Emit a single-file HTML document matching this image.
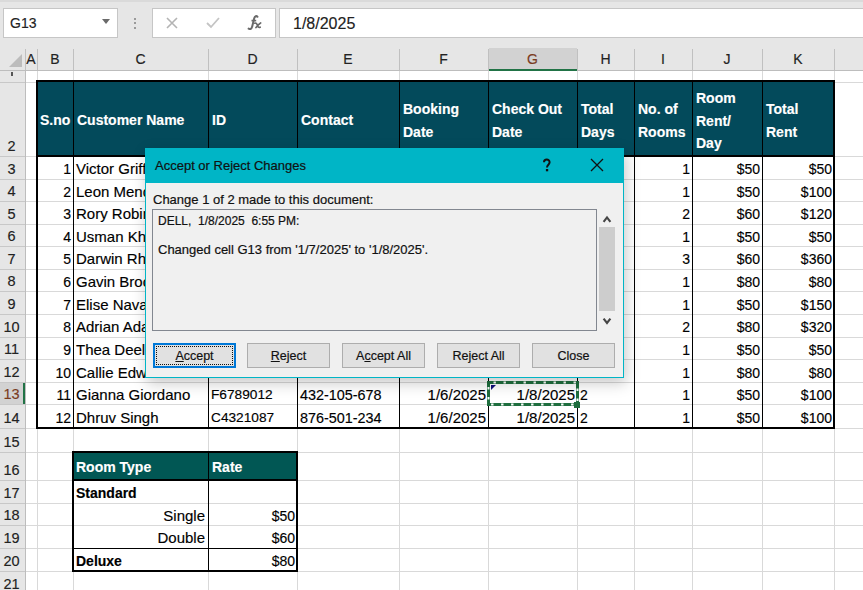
<!DOCTYPE html><html><head><meta charset="utf-8"><style>
*{box-sizing:border-box;margin:0;padding:0}
html,body{width:863px;height:590px;overflow:hidden;background:#fff;font-family:"Liberation Sans", sans-serif;}
.a{position:absolute}
.t{position:absolute;white-space:nowrap;font-size:14px;color:#000;line-height:16px;-webkit-text-stroke:0.15px currentColor}
.hb{font-weight:bold;color:#fff}
.d{-webkit-text-stroke:0.2px #111}
.s{-webkit-text-stroke:0.15px #000}
.g{position:absolute;background:#d9d9d9}
.k{position:absolute;background:#000}
</style></head><body>

<div class="a" style="left:0;top:0;width:863px;height:47px;background:#e6e6e6"></div>
<div class="a" style="left:0;top:0;width:863px;height:2px;background:#dadada"></div>
<div class="a" style="left:3px;top:8px;width:115px;height:30px;background:#fff;border:1px solid #c6c6c6"></div>
<div class="t" style="left:10px;top:15px;font-size:14px;color:#222">G13</div>
<div class="a" style="left:102px;top:19px;width:0;height:0;border-left:4px solid transparent;border-right:4px solid transparent;border-top:5px solid #6a6a6a"></div>
<div class="a" style="left:134px;top:18px;width:2px;height:2px;background:#9a9a9a"></div>
<div class="a" style="left:134px;top:22px;width:2px;height:2px;background:#9a9a9a"></div>
<div class="a" style="left:134px;top:27px;width:2px;height:2px;background:#9a9a9a"></div>
<div class="a" style="left:152px;top:8px;width:124px;height:30px;background:#fff;border:1px solid #c6c6c6"></div>
<svg class="a" style="left:165px;top:16px" width="14" height="14" viewBox="0 0 14 14"><path d="M2 2L12 12M12 2L2 12" stroke="#b4b4b4" stroke-width="1.6"/></svg>
<svg class="a" style="left:205px;top:16px" width="16" height="14" viewBox="0 0 16 14"><path d="M2 7L6 11L14 2" stroke="#c4c4c4" stroke-width="1.8" fill="none"/></svg>
<svg class="a" style="left:244px;top:13px" width="22" height="20" viewBox="0 0 22 20"><path d="M13.5 3.8C12.6 2.6 10.8 3 10.2 5.2L8.2 13.6C7.6 16 6.5 16.6 4.6 15.6" stroke="#6a6a6a" stroke-width="2" fill="none" stroke-linecap="round"/><path d="M7.5 7.6H12.2" stroke="#6a6a6a" stroke-width="1.7"/><path d="M10.8 10.2C12 9.6 12.8 10.4 13.4 12.2C14 14 14.6 14.8 16.2 14.2M16.6 10C15.4 10.6 13.4 12.8 12 14.6" stroke="#6a6a6a" stroke-width="1.7" fill="none" stroke-linecap="round"/></svg>
<div class="a" style="left:279px;top:8px;width:590px;height:30px;background:#fff;border:1px solid #c6c6c6"></div>
<div class="t" style="left:293px;top:16px;font-size:16px;color:#222">1/8/2025</div>
<div class="a" style="left:0;top:47px;width:863px;height:24px;background:#e6e6e6"></div>
<div class="a" style="left:0;top:70px;width:863px;height:1px;background:#bdbdbd"></div>
<div class="a" style="left:489px;top:48px;width:88px;height:22px;background:#d2d2d2"></div>
<div class="a" style="left:489px;top:69px;width:88px;height:2px;background:#217346"></div>
<svg class="a" style="left:9px;top:54px" width="13" height="13" viewBox="0 0 13 13"><path d="M13 0L13 13L0 13Z" fill="#bcbcbc"/></svg>
<div class="t" style="left:25px;top:51px;width:12px;text-align:center;font-size:14px;color:#222">A</div>
<div class="t" style="left:37px;top:51px;width:36px;text-align:center;font-size:14px;color:#222">B</div>
<div class="t" style="left:73px;top:51px;width:135px;text-align:center;font-size:14px;color:#222">C</div>
<div class="t" style="left:208px;top:51px;width:89px;text-align:center;font-size:14px;color:#222">D</div>
<div class="t" style="left:297px;top:51px;width:102px;text-align:center;font-size:14px;color:#222">E</div>
<div class="t" style="left:399px;top:51px;width:89px;text-align:center;font-size:14px;color:#222">F</div>
<div class="t" style="left:488px;top:51px;width:89px;text-align:center;font-size:14px;color:#7a3b1e">G</div>
<div class="t" style="left:577px;top:51px;width:57px;text-align:center;font-size:14px;color:#222">H</div>
<div class="t" style="left:634px;top:51px;width:58px;text-align:center;font-size:14px;color:#222">I</div>
<div class="t" style="left:692px;top:51px;width:70px;text-align:center;font-size:14px;color:#222">J</div>
<div class="t" style="left:762px;top:51px;width:72px;text-align:center;font-size:14px;color:#222">K</div>
<div class="a" style="left:25px;top:49px;width:1px;height:21px;background:#c0c0c0"></div>
<div class="a" style="left:37px;top:49px;width:1px;height:21px;background:#c0c0c0"></div>
<div class="a" style="left:73px;top:49px;width:1px;height:21px;background:#c0c0c0"></div>
<div class="a" style="left:208px;top:49px;width:1px;height:21px;background:#c0c0c0"></div>
<div class="a" style="left:297px;top:49px;width:1px;height:21px;background:#c0c0c0"></div>
<div class="a" style="left:399px;top:49px;width:1px;height:21px;background:#c0c0c0"></div>
<div class="a" style="left:488px;top:49px;width:1px;height:21px;background:#c0c0c0"></div>
<div class="a" style="left:577px;top:49px;width:1px;height:21px;background:#c0c0c0"></div>
<div class="a" style="left:634px;top:49px;width:1px;height:21px;background:#c0c0c0"></div>
<div class="a" style="left:692px;top:49px;width:1px;height:21px;background:#c0c0c0"></div>
<div class="a" style="left:762px;top:49px;width:1px;height:21px;background:#c0c0c0"></div>
<div class="a" style="left:834px;top:49px;width:1px;height:21px;background:#c0c0c0"></div>
<div class="a" style="left:0;top:71px;width:25px;height:530px;background:#e6e6e6"></div>
<div class="a" style="left:25px;top:71px;width:1px;height:530px;background:#bdbdbd"></div>
<div class="a" style="left:0;top:383px;width:25px;height:21px;background:#d2d2d2"></div>
<div class="a" style="left:23px;top:382px;width:2px;height:23px;background:#217346"></div>
<div class="a" style="left:0;top:82px;width:25px;height:1px;background:#c8c8c8"></div>
<div class="a" style="left:11px;top:72px;width:2px;height:4px;background:#555"></div>
<div class="a" style="left:0;top:156px;width:25px;height:1px;background:#c8c8c8"></div>
<div class="t" style="left:-1px;top:138px;width:25px;text-align:center;font-size:14.5px;color:#222">2</div>
<div class="a" style="left:0;top:179px;width:25px;height:1px;background:#c8c8c8"></div>
<div class="t" style="left:-1px;top:161px;width:25px;text-align:center;font-size:14.5px;color:#222">3</div>
<div class="a" style="left:0;top:201px;width:25px;height:1px;background:#c8c8c8"></div>
<div class="t" style="left:-1px;top:183px;width:25px;text-align:center;font-size:14.5px;color:#222">4</div>
<div class="a" style="left:0;top:224px;width:25px;height:1px;background:#c8c8c8"></div>
<div class="t" style="left:-1px;top:206px;width:25px;text-align:center;font-size:14.5px;color:#222">5</div>
<div class="a" style="left:0;top:246px;width:25px;height:1px;background:#c8c8c8"></div>
<div class="t" style="left:-1px;top:228px;width:25px;text-align:center;font-size:14.5px;color:#222">6</div>
<div class="a" style="left:0;top:269px;width:25px;height:1px;background:#c8c8c8"></div>
<div class="t" style="left:-1px;top:251px;width:25px;text-align:center;font-size:14.5px;color:#222">7</div>
<div class="a" style="left:0;top:291px;width:25px;height:1px;background:#c8c8c8"></div>
<div class="t" style="left:-1px;top:273px;width:25px;text-align:center;font-size:14.5px;color:#222">8</div>
<div class="a" style="left:0;top:314px;width:25px;height:1px;background:#c8c8c8"></div>
<div class="t" style="left:-1px;top:296px;width:25px;text-align:center;font-size:14.5px;color:#222">9</div>
<div class="a" style="left:0;top:337px;width:25px;height:1px;background:#c8c8c8"></div>
<div class="t" style="left:-1px;top:319px;width:25px;text-align:center;font-size:14.5px;color:#222">10</div>
<div class="a" style="left:0;top:359px;width:25px;height:1px;background:#c8c8c8"></div>
<div class="t" style="left:-1px;top:341px;width:25px;text-align:center;font-size:14.5px;color:#222">11</div>
<div class="a" style="left:0;top:382px;width:25px;height:1px;background:#c8c8c8"></div>
<div class="t" style="left:-1px;top:364px;width:25px;text-align:center;font-size:14.5px;color:#222">12</div>
<div class="a" style="left:0;top:404px;width:25px;height:1px;background:#c8c8c8"></div>
<div class="t" style="left:-1px;top:386px;width:25px;text-align:center;font-size:14.5px;color:#7a3b1e">13</div>
<div class="a" style="left:0;top:428px;width:25px;height:1px;background:#c8c8c8"></div>
<div class="t" style="left:-1px;top:410px;width:25px;text-align:center;font-size:14.5px;color:#222">14</div>
<div class="a" style="left:0;top:452px;width:25px;height:1px;background:#c8c8c8"></div>
<div class="t" style="left:-1px;top:434px;width:25px;text-align:center;font-size:14.5px;color:#222">15</div>
<div class="a" style="left:0;top:480px;width:25px;height:1px;background:#c8c8c8"></div>
<div class="t" style="left:-1px;top:462px;width:25px;text-align:center;font-size:14.5px;color:#222">16</div>
<div class="a" style="left:0;top:503px;width:25px;height:1px;background:#c8c8c8"></div>
<div class="t" style="left:-1px;top:485px;width:25px;text-align:center;font-size:14.5px;color:#222">17</div>
<div class="a" style="left:0;top:525px;width:25px;height:1px;background:#c8c8c8"></div>
<div class="t" style="left:-1px;top:507px;width:25px;text-align:center;font-size:14.5px;color:#222">18</div>
<div class="a" style="left:0;top:548px;width:25px;height:1px;background:#c8c8c8"></div>
<div class="t" style="left:-1px;top:530px;width:25px;text-align:center;font-size:14.5px;color:#222">19</div>
<div class="a" style="left:0;top:571px;width:25px;height:1px;background:#c8c8c8"></div>
<div class="t" style="left:-1px;top:553px;width:25px;text-align:center;font-size:14.5px;color:#222">20</div>
<div class="a" style="left:0;top:594px;width:25px;height:1px;background:#c8c8c8"></div>
<div class="t" style="left:-1px;top:576px;width:25px;text-align:center;font-size:14.5px;color:#222">21</div>
<div class="g" style="left:37px;top:71px;width:1px;height:530px"></div>
<div class="g" style="left:73px;top:71px;width:1px;height:530px"></div>
<div class="g" style="left:208px;top:71px;width:1px;height:530px"></div>
<div class="g" style="left:297px;top:71px;width:1px;height:530px"></div>
<div class="g" style="left:399px;top:71px;width:1px;height:530px"></div>
<div class="g" style="left:488px;top:71px;width:1px;height:530px"></div>
<div class="g" style="left:577px;top:71px;width:1px;height:530px"></div>
<div class="g" style="left:634px;top:71px;width:1px;height:530px"></div>
<div class="g" style="left:692px;top:71px;width:1px;height:530px"></div>
<div class="g" style="left:762px;top:71px;width:1px;height:530px"></div>
<div class="g" style="left:834px;top:71px;width:1px;height:530px"></div>
<div class="g" style="left:26px;top:82px;width:840px;height:1px"></div>
<div class="g" style="left:26px;top:156px;width:840px;height:1px"></div>
<div class="g" style="left:26px;top:179px;width:840px;height:1px"></div>
<div class="g" style="left:26px;top:201px;width:840px;height:1px"></div>
<div class="g" style="left:26px;top:224px;width:840px;height:1px"></div>
<div class="g" style="left:26px;top:246px;width:840px;height:1px"></div>
<div class="g" style="left:26px;top:269px;width:840px;height:1px"></div>
<div class="g" style="left:26px;top:291px;width:840px;height:1px"></div>
<div class="g" style="left:26px;top:314px;width:840px;height:1px"></div>
<div class="g" style="left:26px;top:337px;width:840px;height:1px"></div>
<div class="g" style="left:26px;top:359px;width:840px;height:1px"></div>
<div class="g" style="left:26px;top:382px;width:840px;height:1px"></div>
<div class="g" style="left:26px;top:404px;width:840px;height:1px"></div>
<div class="g" style="left:26px;top:428px;width:840px;height:1px"></div>
<div class="g" style="left:26px;top:452px;width:840px;height:1px"></div>
<div class="g" style="left:26px;top:480px;width:840px;height:1px"></div>
<div class="g" style="left:26px;top:503px;width:840px;height:1px"></div>
<div class="g" style="left:26px;top:525px;width:840px;height:1px"></div>
<div class="g" style="left:26px;top:548px;width:840px;height:1px"></div>
<div class="g" style="left:26px;top:571px;width:840px;height:1px"></div>
<div class="g" style="left:26px;top:594px;width:840px;height:1px"></div>
<div class="a" style="left:36px;top:81px;width:799px;height:75px;background:#034a5b"></div>
<div class="a" style="left:36px;top:156px;width:799px;height:272px;background:#fff"></div>
<div class="g" style="left:36px;top:179px;width:799px;height:1px"></div>
<div class="g" style="left:36px;top:201px;width:799px;height:1px"></div>
<div class="g" style="left:36px;top:224px;width:799px;height:1px"></div>
<div class="g" style="left:36px;top:246px;width:799px;height:1px"></div>
<div class="g" style="left:36px;top:269px;width:799px;height:1px"></div>
<div class="g" style="left:36px;top:291px;width:799px;height:1px"></div>
<div class="g" style="left:36px;top:314px;width:799px;height:1px"></div>
<div class="g" style="left:36px;top:337px;width:799px;height:1px"></div>
<div class="g" style="left:36px;top:359px;width:799px;height:1px"></div>
<div class="g" style="left:36px;top:382px;width:799px;height:1px"></div>
<div class="g" style="left:36px;top:404px;width:799px;height:1px"></div>
<div class="k" style="left:73px;top:81px;width:1px;height:347px"></div>
<div class="k" style="left:208px;top:81px;width:1px;height:347px"></div>
<div class="k" style="left:297px;top:81px;width:1px;height:347px"></div>
<div class="k" style="left:399px;top:81px;width:1px;height:347px"></div>
<div class="k" style="left:488px;top:81px;width:1px;height:347px"></div>
<div class="k" style="left:577px;top:81px;width:1px;height:347px"></div>
<div class="k" style="left:634px;top:81px;width:1px;height:347px"></div>
<div class="k" style="left:692px;top:81px;width:1px;height:347px"></div>
<div class="k" style="left:762px;top:81px;width:1px;height:347px"></div>
<div class="k" style="left:36px;top:80px;width:799px;height:2px"></div>
<div class="k" style="left:36px;top:427px;width:799px;height:2px"></div>
<div class="k" style="left:36px;top:80px;width:2px;height:349px"></div>
<div class="k" style="left:833px;top:80px;width:2px;height:349px"></div>
<div class="k" style="left:36px;top:155px;width:799px;height:2px"></div>
<div class="t hb" style="left:40px;top:112px">S.no</div>
<div class="t hb" style="left:77px;top:112px">Customer Name</div>
<div class="t hb" style="left:212px;top:112px">ID</div>
<div class="t hb" style="left:301px;top:112px">Contact</div>
<div class="t hb" style="left:403px;top:101px">Booking</div>
<div class="t hb" style="left:403px;top:124px">Date</div>
<div class="t hb" style="left:492px;top:101px">Check Out</div>
<div class="t hb" style="left:492px;top:124px">Date</div>
<div class="t hb" style="left:581px;top:101px">Total</div>
<div class="t hb" style="left:581px;top:124px">Days</div>
<div class="t hb" style="left:638px;top:101px">No. of</div>
<div class="t hb" style="left:638px;top:124px">Rooms</div>
<div class="t hb" style="left:696px;top:90px">Room</div>
<div class="t hb" style="left:696px;top:113px">Rent/</div>
<div class="t hb" style="left:696px;top:135px">Day</div>
<div class="t hb" style="left:766px;top:101px">Total</div>
<div class="t hb" style="left:766px;top:124px">Rent</div>
<div class="t" style="left:37px;top:161px;width:34px;text-align:right;font-size:14px">1</div>
<div class="t" style="left:76px;top:161px;font-size:15px">Victor Griffin</div>
<div class="t" style="left:211px;top:161px;font-size:13.7px">V1234567</div>
<div class="t" style="left:300px;top:161px;font-size:14.4px">123-456-789</div>
<div class="t" style="left:399px;top:161px;width:87px;text-align:right;font-size:15px">1/1/2025</div>
<div class="t" style="left:488px;top:161px;width:87px;text-align:right;font-size:15px">1/3/2025</div>
<div class="t" style="left:580px;top:161px;font-size:14px">2</div>
<div class="t" style="left:634px;top:161px;width:56px;text-align:right;font-size:14px">1</div>
<div class="t" style="left:692px;top:161px;width:68px;text-align:right;font-size:14px">$50</div>
<div class="t" style="left:762px;top:161px;width:70px;text-align:right;font-size:14px">$50</div>
<div class="t" style="left:37px;top:184px;width:34px;text-align:right;font-size:14px">2</div>
<div class="t" style="left:76px;top:184px;font-size:15px">Leon Mendez</div>
<div class="t" style="left:211px;top:184px;font-size:13.7px">L2345678</div>
<div class="t" style="left:300px;top:184px;font-size:14.4px">234-567-890</div>
<div class="t" style="left:399px;top:184px;width:87px;text-align:right;font-size:15px">1/2/2025</div>
<div class="t" style="left:488px;top:184px;width:87px;text-align:right;font-size:15px">1/4/2025</div>
<div class="t" style="left:580px;top:184px;font-size:14px">2</div>
<div class="t" style="left:634px;top:184px;width:56px;text-align:right;font-size:14px">1</div>
<div class="t" style="left:692px;top:184px;width:68px;text-align:right;font-size:14px">$50</div>
<div class="t" style="left:762px;top:184px;width:70px;text-align:right;font-size:14px">$100</div>
<div class="t" style="left:37px;top:206px;width:34px;text-align:right;font-size:14px">3</div>
<div class="t" style="left:76px;top:206px;font-size:15px">Rory Robinson</div>
<div class="t" style="left:211px;top:206px;font-size:13.7px">R3456789</div>
<div class="t" style="left:300px;top:206px;font-size:14.4px">345-678-901</div>
<div class="t" style="left:399px;top:206px;width:87px;text-align:right;font-size:15px">1/2/2025</div>
<div class="t" style="left:488px;top:206px;width:87px;text-align:right;font-size:15px">1/4/2025</div>
<div class="t" style="left:580px;top:206px;font-size:14px">2</div>
<div class="t" style="left:634px;top:206px;width:56px;text-align:right;font-size:14px">2</div>
<div class="t" style="left:692px;top:206px;width:68px;text-align:right;font-size:14px">$60</div>
<div class="t" style="left:762px;top:206px;width:70px;text-align:right;font-size:14px">$120</div>
<div class="t" style="left:37px;top:229px;width:34px;text-align:right;font-size:14px">4</div>
<div class="t" style="left:76px;top:229px;font-size:15px">Usman Khan</div>
<div class="t" style="left:211px;top:229px;font-size:13.7px">U4567890</div>
<div class="t" style="left:300px;top:229px;font-size:14.4px">456-789-012</div>
<div class="t" style="left:399px;top:229px;width:87px;text-align:right;font-size:15px">1/3/2025</div>
<div class="t" style="left:488px;top:229px;width:87px;text-align:right;font-size:15px">1/4/2025</div>
<div class="t" style="left:580px;top:229px;font-size:14px">1</div>
<div class="t" style="left:634px;top:229px;width:56px;text-align:right;font-size:14px">1</div>
<div class="t" style="left:692px;top:229px;width:68px;text-align:right;font-size:14px">$50</div>
<div class="t" style="left:762px;top:229px;width:70px;text-align:right;font-size:14px">$50</div>
<div class="t" style="left:37px;top:251px;width:34px;text-align:right;font-size:14px">5</div>
<div class="t" style="left:76px;top:251px;font-size:15px">Darwin Rhodes</div>
<div class="t" style="left:211px;top:251px;font-size:13.7px">D5678901</div>
<div class="t" style="left:300px;top:251px;font-size:14.4px">567-890-123</div>
<div class="t" style="left:399px;top:251px;width:87px;text-align:right;font-size:15px">1/3/2025</div>
<div class="t" style="left:488px;top:251px;width:87px;text-align:right;font-size:15px">1/5/2025</div>
<div class="t" style="left:580px;top:251px;font-size:14px">2</div>
<div class="t" style="left:634px;top:251px;width:56px;text-align:right;font-size:14px">3</div>
<div class="t" style="left:692px;top:251px;width:68px;text-align:right;font-size:14px">$60</div>
<div class="t" style="left:762px;top:251px;width:70px;text-align:right;font-size:14px">$360</div>
<div class="t" style="left:37px;top:274px;width:34px;text-align:right;font-size:14px">6</div>
<div class="t" style="left:76px;top:274px;font-size:15px">Gavin Brooks</div>
<div class="t" style="left:211px;top:274px;font-size:13.7px">G6789012</div>
<div class="t" style="left:300px;top:274px;font-size:14.4px">678-901-234</div>
<div class="t" style="left:399px;top:274px;width:87px;text-align:right;font-size:15px">1/4/2025</div>
<div class="t" style="left:488px;top:274px;width:87px;text-align:right;font-size:15px">1/5/2025</div>
<div class="t" style="left:580px;top:274px;font-size:14px">1</div>
<div class="t" style="left:634px;top:274px;width:56px;text-align:right;font-size:14px">1</div>
<div class="t" style="left:692px;top:274px;width:68px;text-align:right;font-size:14px">$80</div>
<div class="t" style="left:762px;top:274px;width:70px;text-align:right;font-size:14px">$80</div>
<div class="t" style="left:37px;top:297px;width:34px;text-align:right;font-size:14px">7</div>
<div class="t" style="left:76px;top:297px;font-size:15px">Elise Navarro</div>
<div class="t" style="left:211px;top:297px;font-size:13.7px">E7890123</div>
<div class="t" style="left:300px;top:297px;font-size:14.4px">789-012-345</div>
<div class="t" style="left:399px;top:297px;width:87px;text-align:right;font-size:15px">1/4/2025</div>
<div class="t" style="left:488px;top:297px;width:87px;text-align:right;font-size:15px">1/7/2025</div>
<div class="t" style="left:580px;top:297px;font-size:14px">3</div>
<div class="t" style="left:634px;top:297px;width:56px;text-align:right;font-size:14px">1</div>
<div class="t" style="left:692px;top:297px;width:68px;text-align:right;font-size:14px">$50</div>
<div class="t" style="left:762px;top:297px;width:70px;text-align:right;font-size:14px">$150</div>
<div class="t" style="left:37px;top:319px;width:34px;text-align:right;font-size:14px">8</div>
<div class="t" style="left:76px;top:319px;font-size:15px">Adrian Adams</div>
<div class="t" style="left:211px;top:319px;font-size:13.7px">A8901234</div>
<div class="t" style="left:300px;top:319px;font-size:14.4px">890-123-456</div>
<div class="t" style="left:399px;top:319px;width:87px;text-align:right;font-size:15px">1/5/2025</div>
<div class="t" style="left:488px;top:319px;width:87px;text-align:right;font-size:15px">1/7/2025</div>
<div class="t" style="left:580px;top:319px;font-size:14px">2</div>
<div class="t" style="left:634px;top:319px;width:56px;text-align:right;font-size:14px">2</div>
<div class="t" style="left:692px;top:319px;width:68px;text-align:right;font-size:14px">$80</div>
<div class="t" style="left:762px;top:319px;width:70px;text-align:right;font-size:14px">$320</div>
<div class="t" style="left:37px;top:342px;width:34px;text-align:right;font-size:14px">9</div>
<div class="t" style="left:76px;top:342px;font-size:15px">Thea Deel</div>
<div class="t" style="left:211px;top:342px;font-size:13.7px">T9012345</div>
<div class="t" style="left:300px;top:342px;font-size:14.4px">901-234-567</div>
<div class="t" style="left:399px;top:342px;width:87px;text-align:right;font-size:15px">1/5/2025</div>
<div class="t" style="left:488px;top:342px;width:87px;text-align:right;font-size:15px">1/6/2025</div>
<div class="t" style="left:580px;top:342px;font-size:14px">1</div>
<div class="t" style="left:634px;top:342px;width:56px;text-align:right;font-size:14px">1</div>
<div class="t" style="left:692px;top:342px;width:68px;text-align:right;font-size:14px">$50</div>
<div class="t" style="left:762px;top:342px;width:70px;text-align:right;font-size:14px">$50</div>
<div class="t" style="left:37px;top:365px;width:34px;text-align:right;font-size:14px">10</div>
<div class="t" style="left:76px;top:365px;font-size:15px">Callie Edwards</div>
<div class="t" style="left:211px;top:365px;font-size:13.7px">C0123456</div>
<div class="t" style="left:300px;top:365px;font-size:14.4px">012-345-678</div>
<div class="t" style="left:399px;top:365px;width:87px;text-align:right;font-size:15px">1/5/2025</div>
<div class="t" style="left:488px;top:365px;width:87px;text-align:right;font-size:15px">1/6/2025</div>
<div class="t" style="left:580px;top:365px;font-size:14px">1</div>
<div class="t" style="left:634px;top:365px;width:56px;text-align:right;font-size:14px">1</div>
<div class="t" style="left:692px;top:365px;width:68px;text-align:right;font-size:14px">$80</div>
<div class="t" style="left:762px;top:365px;width:70px;text-align:right;font-size:14px">$80</div>
<div class="t" style="left:37px;top:387px;width:34px;text-align:right;font-size:14px">11</div>
<div class="t" style="left:76px;top:387px;font-size:15px">Gianna Giordano</div>
<div class="t" style="left:211px;top:387px;font-size:13.7px">F6789012</div>
<div class="t" style="left:300px;top:387px;font-size:14.4px">432-105-678</div>
<div class="t" style="left:399px;top:387px;width:87px;text-align:right;font-size:15px">1/6/2025</div>
<div class="t" style="left:488px;top:387px;width:87px;text-align:right;font-size:15px">1/8/2025</div>
<div class="t" style="left:580px;top:387px;font-size:14px">2</div>
<div class="t" style="left:634px;top:387px;width:56px;text-align:right;font-size:14px">1</div>
<div class="t" style="left:692px;top:387px;width:68px;text-align:right;font-size:14px">$50</div>
<div class="t" style="left:762px;top:387px;width:70px;text-align:right;font-size:14px">$100</div>
<div class="t" style="left:37px;top:410px;width:34px;text-align:right;font-size:14px">12</div>
<div class="t" style="left:76px;top:410px;font-size:15px">Dhruv Singh</div>
<div class="t" style="left:211px;top:410px;font-size:13.7px">C4321087</div>
<div class="t" style="left:300px;top:410px;font-size:14.4px">876-501-234</div>
<div class="t" style="left:399px;top:410px;width:87px;text-align:right;font-size:15px">1/6/2025</div>
<div class="t" style="left:488px;top:410px;width:87px;text-align:right;font-size:15px">1/8/2025</div>
<div class="t" style="left:580px;top:410px;font-size:14px">2</div>
<div class="t" style="left:634px;top:410px;width:56px;text-align:right;font-size:14px">1</div>
<div class="t" style="left:692px;top:410px;width:68px;text-align:right;font-size:14px">$50</div>
<div class="t" style="left:762px;top:410px;width:70px;text-align:right;font-size:14px">$100</div>
<svg class="a" style="left:486px;top:380px" width="96" height="30" viewBox="0 0 96 30"><rect x="2.5" y="2.5" width="89" height="22" fill="none" stroke="#1e6e3e" stroke-width="3"/><rect x="2.5" y="2.5" width="89" height="22" fill="none" stroke="#fff" stroke-width="2" stroke-dasharray="2.4 7.6" stroke-dashoffset="-5"/><rect x="88" y="22" width="6" height="6" fill="#1e6e3e"/><path d="M5 5H10L5 10Z" fill="#10107a"/></svg>
<div class="a" style="left:72px;top:452px;width:226px;height:28px;background:#015754"></div>
<div class="a" style="left:72px;top:480px;width:226px;height:91px;background:#fff"></div>
<div class="g" style="left:72px;top:503px;width:226px;height:1px"></div>
<div class="g" style="left:72px;top:525px;width:226px;height:1px"></div>
<div class="k" style="left:72px;top:548px;width:226px;height:1px"></div>
<div class="k" style="left:208px;top:452px;width:1px;height:119px"></div>
<div class="k" style="left:72px;top:451px;width:226px;height:2px"></div>
<div class="k" style="left:72px;top:479px;width:226px;height:2px"></div>
<div class="k" style="left:72px;top:570px;width:226px;height:2px"></div>
<div class="k" style="left:72px;top:451px;width:2px;height:121px"></div>
<div class="k" style="left:296px;top:451px;width:2px;height:121px"></div>
<div class="t hb" style="left:76px;top:459px">Room Type</div>
<div class="t hb" style="left:212px;top:459px">Rate</div>
<div class="t" style="left:76px;top:485px;font-weight:bold">Standard</div>
<div class="t" style="left:73px;top:508px;width:132px;text-align:right;font-size:15px">Single</div>
<div class="t" style="left:209px;top:508px;width:86px;text-align:right">$50</div>
<div class="t" style="left:73px;top:530px;width:132px;text-align:right;font-size:15px">Double</div>
<div class="t" style="left:209px;top:530px;width:86px;text-align:right">$60</div>
<div class="t" style="left:76px;top:553px;font-weight:bold">Deluxe</div>
<div class="t" style="left:209px;top:553px;width:86px;text-align:right">$80</div>
<div class="a" style="left:145px;top:148px;width:479px;height:230px;background:#f0f0f0;border:1px solid #00b5c6;box-shadow:2px 5px 14px rgba(0,0,0,0.22)"></div>
<div class="a" style="left:145px;top:148px;width:479px;height:35px;background:#00b5c6"></div>
<div class="t d" style="left:155px;top:158px;font-size:13px;color:#111">Accept or Reject Changes</div>
<svg class="a" style="left:540px;top:157px" width="12" height="16" viewBox="0 0 12 16"><path d="M4 5.2C4 1.8 9.6 1.6 9.6 5.3C9.6 7.6 7 7.8 7 10.4" stroke="#111" stroke-width="2" fill="none"/><rect x="5.9" y="12" width="2.3" height="2.3" fill="#111"/></svg>
<svg class="a" style="left:590px;top:158px" width="14" height="14" viewBox="0 0 14 14"><path d="M1 1L13 13M13 1L1 13" stroke="#111" stroke-width="1.3"/></svg>
<div class="t d" style="left:153px;top:192px;font-size:13px;color:#111">Change 1 of 2 made to this document:</div>
<div class="a" style="left:152px;top:209px;width:445px;height:122px;background:#f0f0f0;border:1px solid #828790"></div>
<div class="t d" style="left:158px;top:213px;font-size:12px;color:#111">DELL,&nbsp; 1/8/2025&nbsp; 6:55 PM:</div>
<div class="t d" style="left:158px;top:242px;font-size:13px;color:#111">Changed cell G13 from '1/7/2025' to '1/8/2025'.</div>
<div class="a" style="left:599px;top:227px;width:16px;height:84px;background:#cdcdcd"></div>
<svg class="a" style="left:602px;top:214px" width="10" height="10" viewBox="0 0 10 10"><path d="M1.6 7.8L5 3.4L8.4 7.8" stroke="#454545" stroke-width="2.1" fill="none"/></svg>
<svg class="a" style="left:602px;top:316px" width="10" height="10" viewBox="0 0 10 10"><path d="M1.6 2.6L5 7L8.4 2.6" stroke="#454545" stroke-width="2.1" fill="none"/></svg>
<div class="a" style="left:153px;top:343px;width:83px;height:25px;background:#e1e1e1;border:2px solid #0078d7"></div>
<div class="a" style="left:156px;top:346px;width:77px;height:19px;border:1px dotted #111"></div>
<div class="t d" style="left:153px;top:348px;width:83px;text-align:center;font-size:12.5px;color:#111"><u>A</u>ccept</div>
<div class="a" style="left:247px;top:343px;width:83px;height:25px;background:#e1e1e1;border:1px solid #adadad"></div>
<div class="t d" style="left:247px;top:348px;width:83px;text-align:center;font-size:12.5px;color:#111"><u>R</u>eject</div>
<div class="a" style="left:342px;top:343px;width:83px;height:25px;background:#e1e1e1;border:1px solid #adadad"></div>
<div class="t d" style="left:342px;top:348px;width:83px;text-align:center;font-size:12.5px;color:#111">A<u>c</u>cept All</div>
<div class="a" style="left:437px;top:343px;width:83px;height:25px;background:#e1e1e1;border:1px solid #adadad"></div>
<div class="t d" style="left:437px;top:348px;width:83px;text-align:center;font-size:12.5px;color:#111">Re<u>j</u>ect All</div>
<div class="a" style="left:532px;top:343px;width:83px;height:25px;background:#e1e1e1;border:1px solid #adadad"></div>
<div class="t d" style="left:532px;top:348px;width:83px;text-align:center;font-size:12.5px;color:#111">Close</div>
</body></html>
